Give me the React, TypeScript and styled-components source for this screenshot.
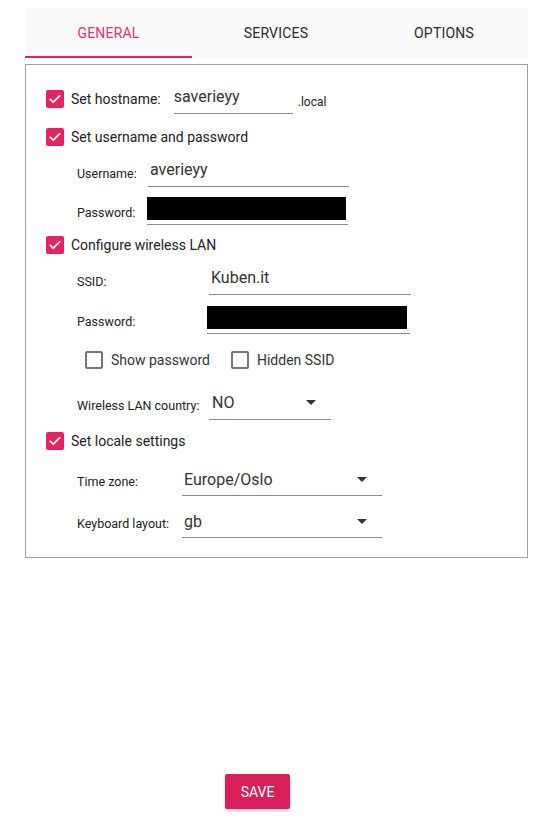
import React from "react";
import styled, { createGlobalStyle } from "styled-components";

const Global = createGlobalStyle`
  html, body { margin: 0; padding: 0; background: #fff; }
  body { font-family: Roboto, "Noto Sans", "Liberation Sans", sans-serif; color: #212121; }
  * { box-sizing: border-box; }
`;

const Page = styled.div`
  width: 539px;
  height: 825px;
  padding: 8px 11px 0 25px;
  display: flex;
  flex-direction: column;
`;

const TabBar = styled.div`
  display: grid;
  grid-template-columns: 167px 168px 168px;
  height: 50px;
  background: #fafafa;
`;

const Tab = styled.div<{ $active?: boolean }>`
  display: flex;
  align-items: center;
  justify-content: center;
  font-size: 14px;
  font-weight: 400;
  letter-spacing: 0.2px;
  text-transform: uppercase;
  color: ${(p) => (p.$active ? "#e8336f" : "#2a2a2a")};
  border-bottom: 2px solid ${(p) => (p.$active ? "#e61d5f" : "transparent")};
  padding-top: 2px;
`;

const Panel = styled.div`
  margin-top: 6px;
  border: 1px solid #a0a0a0;
  padding: 16px 20px 14px 20px;
  display: flex;
  flex-direction: column;
`;

const Row = styled.div<{ $h: number; $mt?: number; $indent?: number }>`
  display: flex;
  align-items: center;
  height: ${(p) => p.$h}px;
  margin-top: ${(p) => p.$mt ?? 0}px;
  padding-left: ${(p) => p.$indent ?? 0}px;
`;

const Box = styled.span<{ $checked?: boolean }>`
  width: 18px;
  height: 18px;
  border-radius: 2px;
  flex: none;
  display: flex;
  align-items: center;
  justify-content: center;
  background: ${(p) => (p.$checked ? "#e6225f" : "#fff")};
  border: ${(p) => (p.$checked ? "none" : "2px solid #757575")};
`;

const MainLabel = styled.span`
  font-size: 14px;
  color: #222;
  margin-left: 7px;
`;

const SmallLabel = styled.span<{ $w: number }>`
  font-size: 12.5px;
  color: #222;
  width: ${(p) => p.$w}px;
  flex: none;
  padding-top: 2px;
  white-space: nowrap;
`;

const Field = styled.div<{ $w: number; $h?: number; $ml?: number; $pb?: number; $pl?: number }>`
  width: ${(p) => p.$w}px;
  height: ${(p) => p.$h ?? 30}px;
  margin-left: ${(p) => p.$ml ?? 0}px;
  border-bottom: 1px solid #8a8a8a;
  display: flex;
  align-items: center;
  justify-content: space-between;
  font-size: 16px;
  color: #333;
  padding: 0 2px ${(p) => p.$pb ?? 4}px ${(p) => p.$pl ?? 1}px;
`;

const Masked = styled.div<{ $w: number }>`
  width: ${(p) => p.$w}px;
  height: 23px;
  background: #000;
  margin-left: -2px;
`;

const Suffix = styled.span`
  font-size: 12px;
  color: #222;
  margin-left: 5px;
  padding-top: 6px;
`;

const OptionLabel = styled.span`
  font-size: 14px;
  color: #333;
  margin-left: 8px;
  margin-right: 21px;
`;

const Arrow = styled.span`
  width: 0;
  height: 0;
  border-left: 5px solid transparent;
  border-right: 5px solid transparent;
  border-top: 5px solid #333;
  margin-right: 13px;
`;

const Footer = styled.div`
  margin-top: 216px;
  padding-left: 200px;
`;

const SaveButton = styled.button`
  width: 65px;
  height: 35px;
  border: none;
  border-radius: 2px;
  background: #d81f5a;
  color: #fff;
  font-family: Roboto, "Noto Sans", sans-serif;
  font-size: 14px;
  font-weight: 400;
  box-shadow: 0 2px 3px rgba(0, 0, 0, 0.2);
`;

const Check = ({ checked }: { checked?: boolean }) => (
  <Box $checked={checked}>
    {checked && (
      <svg width="14" height="14" viewBox="0 0 24 24">
        <path d="M4 12.5l5 5L20 6.5" fill="none" stroke="#fff" strokeWidth="3.2" strokeLinecap="round" strokeLinejoin="round" />
      </svg>
    )}
  </Box>
);

export default function App() {
  return (
    <>
      <Global />
      <Page>
        <TabBar>
          <Tab $active>General</Tab>
          <Tab>Services</Tab>
          <Tab>Options</Tab>
        </TabBar>
        <Panel>
          <Row $h={36}>
            <Check checked />
            <MainLabel>Set hostname:</MainLabel>
            <Field $w={119} $ml={13} $pb={5} $pl={0}>saverieyy</Field>
            <Suffix>.local</Suffix>
          </Row>
          <Row $h={40}>
            <Check checked />
            <MainLabel>Set username and password</MainLabel>
          </Row>
          <Row $h={30} $indent={31}>
            <SmallLabel $w={71}>Username:</SmallLabel>
            <Field $w={201} $pl={2}>averieyy</Field>
          </Row>
          <Row $h={30} $mt={9} $indent={31}>
            <SmallLabel $w={70}>Password:</SmallLabel>
            <Field $w={201} $h={28} $pl={2}>
              <Masked $w={199} />
            </Field>
          </Row>
          <Row $h={38}>
            <Check checked />
            <MainLabel>Configure wireless LAN</MainLabel>
          </Row>
          <Row $h={32} $indent={31}>
            <SmallLabel $w={132}>SSID:</SmallLabel>
            <Field $w={202} $pl={2}>Kuben.it</Field>
          </Row>
          <Row $h={30} $mt={9} $indent={31}>
            <SmallLabel $w={130}>Password:</SmallLabel>
            <Field $w={203} $h={28} $pl={2}>
              <Masked $w={200} />
            </Field>
          </Row>
          <Row $h={50} $indent={39}>
            <Check />
            <OptionLabel>Show password</OptionLabel>
            <Check />
            <OptionLabel>Hidden SSID</OptionLabel>
          </Row>
          <Row $h={38} $indent={31}>
            <SmallLabel $w={132}>Wireless LAN country:</SmallLabel>
            <Field $w={122} $h={32} $pb={2} $pl={3}>
              NO
              <Arrow />
            </Field>
          </Row>
          <Row $h={36}>
            <Check checked />
            <MainLabel>Set locale settings</MainLabel>
          </Row>
          <Row $h={42} $indent={31}>
            <SmallLabel $w={105}>Time zone:</SmallLabel>
            <Field $w={200} $h={32} $pb={1} $pl={2}>
              Europe/Oslo
              <Arrow />
            </Field>
          </Row>
          <Row $h={42} $indent={31}>
            <SmallLabel $w={105}>Keyboard layout:</SmallLabel>
            <Field $w={200} $h={32} $pb={1} $pl={2}>
              gb
              <Arrow />
            </Field>
          </Row>
        </Panel>
        <Footer>
          <SaveButton>SAVE</SaveButton>
        </Footer>
      </Page>
    </>
  );
}
